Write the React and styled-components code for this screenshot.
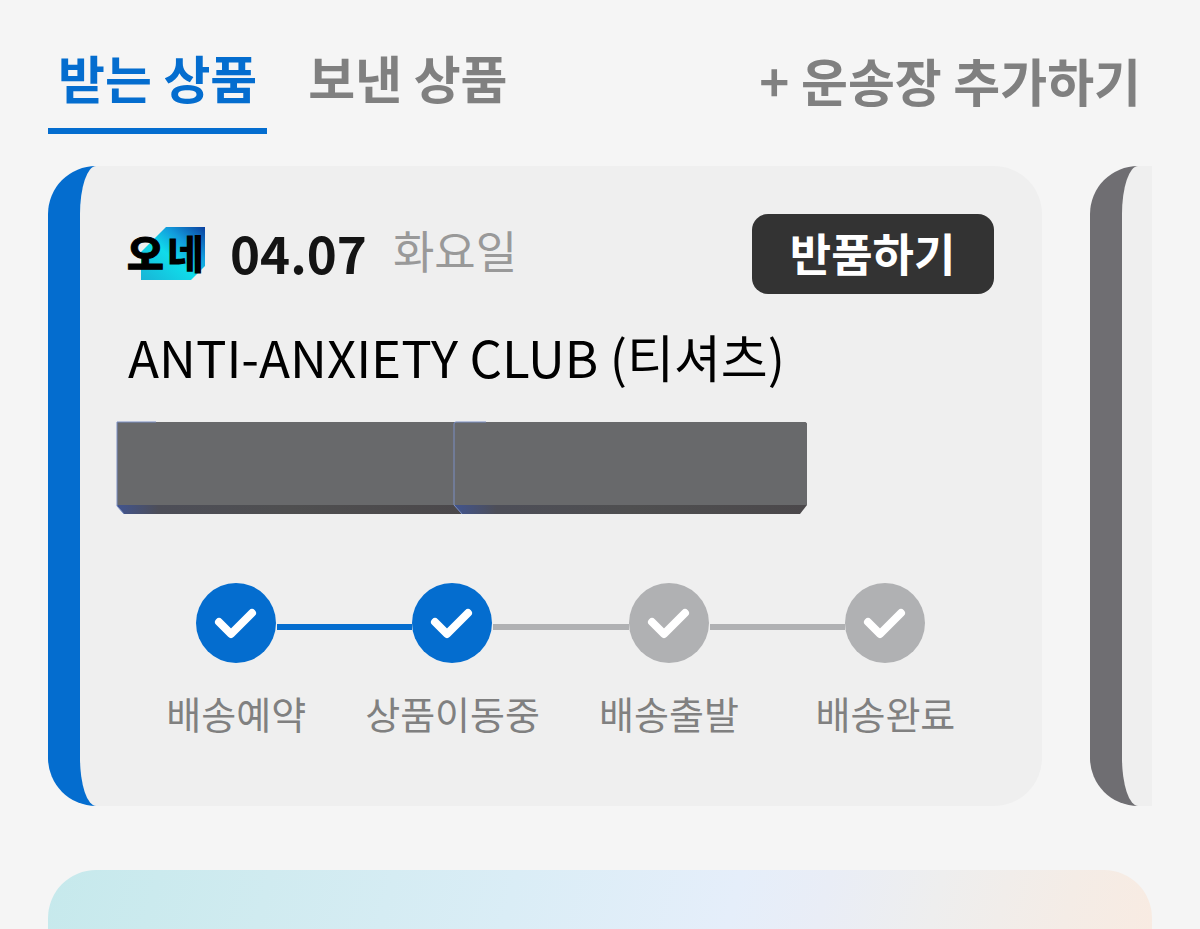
import { useState } from 'react';

import styled, { createGlobalStyle } from 'styled-components';

const blue = '#046dcf';
const grey = '#808080';

const GlobalStyle = createGlobalStyle`
  * {
    box-sizing: border-box;
  }

  html,
  body {
    margin: 0;
    background: #f5f5f5;
  }

  body,
  button {
    font-family: 'Noto Sans CJK KR', 'Noto Sans', sans-serif;
  }
`;

const Page = styled.main`
  display: flex;
  flex-direction: column;
  min-height: 100vh;
  padding: 32px 48px 0;
`;

const TopBar = styled.header`
  display: flex;
  align-items: flex-start;
  justify-content: space-between;
  margin-bottom: 32px;
`;

const Tabs = styled.nav`
  display: flex;
  gap: 31px;
`;

const PlainButton = styled.button`
  border: 0;
  background: none;
  color: ${grey};
  font-size: 51px;
  font-weight: 700;
  line-height: 90px;
  white-space: nowrap;
  cursor: pointer;
`;

const Tab = styled(PlainButton)`
  padding: 0 10px 6px;
  color: ${props => (props.$active ? blue : grey)};
  border-bottom: 6px solid ${props => (props.$active ? blue : 'transparent')};
`;

const AddButton = styled(PlainButton)`
  padding: 3px 11px 0 0;
`;

const Carousel = styled.section`
  display: flex;
  gap: 48px;
  overflow: hidden;
  margin-bottom: 64px;
`;

const Card = styled.article`
  flex: 0 0 90%;
  min-height: 640px;
  padding: 48px 48px 64px;
  border-left: 32px solid ${props => props.$accent};
  border-radius: 48px;
  background: #efefef;
`;

const CardHead = styled.div`
  display: flex;
  align-items: center;
  height: 80px;
`;

const LogoMark = styled.svg`
  flex: none;
  width: 80px;
  height: 56px;
  overflow: visible;
  font-family: 'Noto Sans CJK KR', sans-serif;
  font-size: 40px;
  font-weight: 900;
`;

const DateText = styled.time`
  margin: 0 0 4px 22px;
  color: #141414;
  font-size: 51px;
  font-weight: 700;
  line-height: 76px;
`;

const Weekday = styled.span`
  margin: 0 auto 8px 26px;
  color: #999;
  font-size: 45px;
  font-weight: 400;
  line-height: 72px;
`;

const ReturnButton = styled.button`
  width: 242px;
  height: 80px;
  padding: 0 0 2px;
  border: 0;
  border-radius: 16px;
  background: #333;
  color: #fff;
  font-size: 45px;
  font-weight: 700;
  line-height: 78px;
  cursor: pointer;
`;

const Title = styled.h2`
  margin: 22px 0 25px;
  color: #000;
  font-size: 51px;
  font-weight: 400;
  line-height: 80px;
  white-space: nowrap;
`;

const Redacted = styled.svg`
  display: block;
  width: 692px;
  height: 94px;
  margin: 0 0 68px -12px;
`;

const Steps = styled.ol`
  display: grid;
  grid-template-columns: repeat(4, 1fr);
  margin: 0;
  padding: 0;
  list-style: none;
`;

const Step = styled.li`
  display: flex;
  flex-direction: column;
  align-items: center;
`;

const Track = styled.div`
  display: flex;
  align-items: center;
  align-self: stretch;
`;

const Line = styled.span`
  flex: 1;
  height: 6px;
  margin-top: 8px;
  background: ${props => props.$color};
`;

const Circle = styled.span`
  display: flex;
  width: 80px;
  height: 80px;
  margin-right: 1px;
  border-radius: 50%;
  background: ${props => (props.$done ? blue : '#b0b1b3')};
`;

const StepLabel = styled.span`
  margin-top: 22px;
  color: ${grey};
  font-size: 38px;
  font-weight: 400;
  line-height: 56px;
`;

const Banner = styled.section`
  flex: 1;
  min-height: 48px;
  border-radius: 48px 48px 0 0;
  background: linear-gradient(
    105deg,
    #c6e9ec 0%,
    #d0ebf0 20%,
    #daedf6 42%,
    #e5eefa 62%,
    #e9edf6 70%,
    #eeeeee 80%,
    #f4ece6 92%,
    #f8ebe2 100%
  );
`;

const Logo = () => (
  <LogoMark viewBox='0 0 80 56' role='img' aria-label='오네'>
    <defs>
      <linearGradient id='logoFill' x1='0' y1='1' x2='1' y2='0'>
        <stop offset='0' stopColor='#19b4d6' />
        <stop offset='0.45' stopColor='#10dcea' />
        <stop offset='0.7' stopColor='#129bdc' />
        <stop offset='1' stopColor='#0b3f9e' />
      </linearGradient>
    </defs>
    <path d='M38 1H77V40L63 54H13V26Z' fill='url(#logoFill)' />
    <text x='-1' y='43' stroke='#000' strokeWidth='1'>오</text>
    <text x='39' y='43'>네</text>
  </LogoMark>
);

const HiddenAddress = () => (
  <Redacted viewBox='0 0 692 94' aria-hidden='true'>
    <defs>
      <linearGradient id='edge' x1='0' x2='1'>
        <stop offset='0' stopColor='#41548f' />
        <stop offset='0.12' stopColor='#4d4e58' />
        <stop offset='0.5' stopColor='#4f4f50' />
        <stop offset='1' stopColor='#4b484b' />
      </linearGradient>
    </defs>
    <path d='M1 1H340V84L346 93H8L1 85Z' fill='url(#edge)' />
    <path d='M1 1H338V84H1Z' fill='#68696b' />
    <path d='M8 93L1 85V1H40' fill='none' stroke='#7b8fc4' />
    <path d='M338 3Q338 1 340 1H688Q691 1 691 4V84L684 93H346L338 84Z' fill='url(#edge)' />
    <path d='M338 3Q338 1 340 1H688Q691 1 691 4V84H338Z' fill='#68696b' />
    <path d='M346 93L338 84V3Q338 1 340 1H370' fill='none' stroke='#7b8fc4' />
  </Redacted>
);

const CheckIcon = () => (
  <svg viewBox='0 0 80 80' aria-hidden='true'>
    <path
      d='M23 39L35 51L56 30'
      fill='none'
      stroke='#fff'
      strokeWidth='8'
      strokeLinecap='round'
      strokeLinejoin='round'
    />
  </svg>
);

const steps = [
  { label: '배송예약', done: true },
  { label: '상품이동중', done: true },
  { label: '배송출발', done: false },
  { label: '배송완료', done: false },
];

const lineColor = step => {
  if (!step) return 'transparent';
  return step.done ? blue : '#b0b1b3';
};

const Progress = () => (
  <Steps>
    {steps.map((step, i) => (
      <Step key={step.label}>
        <Track>
          <Line $color={i === 0 ? 'transparent' : lineColor(step)} />
          <Circle $done={step.done}>
            <CheckIcon />
          </Circle>
          <Line $color={lineColor(steps[i + 1])} />
        </Track>
        <StepLabel>{step.label}</StepLabel>
      </Step>
    ))}
  </Steps>
);

const App = () => {
  const [tab, setTab] = useState('받는 상품');

  return (
    <>
      <GlobalStyle />
      <Page>
        <TopBar>
          <Tabs>
            {['받는 상품', '보낸 상품'].map(name => (
              <Tab
                key={name}
                type='button'
                $active={tab === name}
                onClick={() => setTab(name)}
              >
                {name}
              </Tab>
            ))}
          </Tabs>
          <AddButton type='button'>+ 운송장 추가하기</AddButton>
        </TopBar>
        <Carousel>
          <Card $accent={blue}>
            <CardHead>
              <Logo />
              <DateText dateTime='04-07'>04.07</DateText>
              <Weekday>화요일</Weekday>
              <ReturnButton type='button'>반품하기</ReturnButton>
            </CardHead>
            <Title>ANTI-ANXIETY CLUB (티셔츠)</Title>
            <HiddenAddress />
            <Progress />
          </Card>
          <Card $accent='#6f6e72' />
        </Carousel>
        <Banner />
      </Page>
    </>
  );
};

export default App;
